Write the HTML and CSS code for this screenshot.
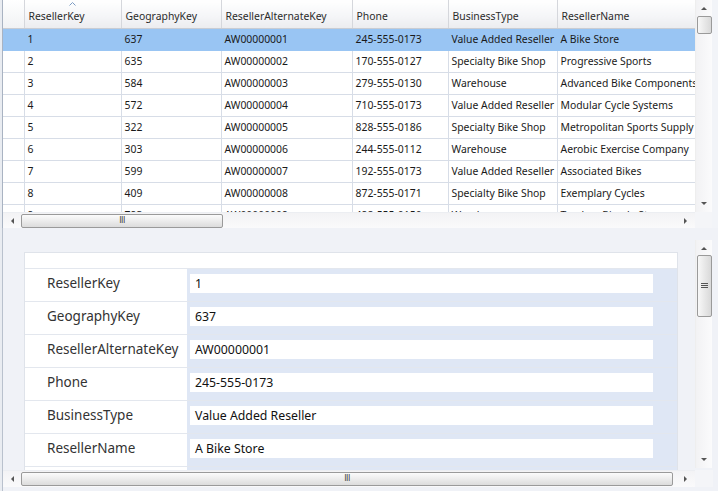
FILE: index.html
```html
<!DOCTYPE html>
<html>
<head>
<meta charset="utf-8">
<link rel="stylesheet" href="styles.css">
</head>
<body>
<div class="window">
  <div class="top">
    <div class="top-main">
      <div class="grid-wrap">
        <table class="grid">
          <colgroup>
            <col class="c0"><col class="c1"><col class="c2"><col class="c3"><col class="c4"><col class="c5"><col class="c6">
          </colgroup>
          <thead>
            <tr>
              <th class="rh"></th>
              <th class="sorted">ResellerKey<svg class="sort" width="7" height="4" viewBox="0 0 7 4"><path d="M0.5 3.5 L3.5 0.5 L6.5 3.5" fill="none" stroke="#7c9cc4" stroke-width="1"/></svg></th>
              <th>GeographyKey</th>
              <th>ResellerAlternateKey</th>
              <th>Phone</th>
              <th>BusinessType</th>
              <th>ResellerName</th>
            </tr>
          </thead>
          <tbody>
            <tr class="sel"><td class="rh"></td><td>1</td><td>637</td><td>AW00000001</td><td>245-555-0173</td><td>Value Added Reseller</td><td>A Bike Store</td></tr>
            <tr><td class="rh"></td><td>2</td><td>635</td><td>AW00000002</td><td>170-555-0127</td><td>Specialty Bike Shop</td><td>Progressive Sports</td></tr>
            <tr><td class="rh"></td><td>3</td><td>584</td><td>AW00000003</td><td>279-555-0130</td><td>Warehouse</td><td>Advanced Bike Components</td></tr>
            <tr><td class="rh"></td><td>4</td><td>572</td><td>AW00000004</td><td>710-555-0173</td><td>Value Added Reseller</td><td>Modular Cycle Systems</td></tr>
            <tr><td class="rh"></td><td>5</td><td>322</td><td>AW00000005</td><td>828-555-0186</td><td>Specialty Bike Shop</td><td>Metropolitan Sports Supply</td></tr>
            <tr><td class="rh"></td><td>6</td><td>303</td><td>AW00000006</td><td>244-555-0112</td><td>Warehouse</td><td>Aerobic Exercise Company</td></tr>
            <tr><td class="rh"></td><td>7</td><td>599</td><td>AW00000007</td><td>192-555-0173</td><td>Value Added Reseller</td><td>Associated Bikes</td></tr>
            <tr><td class="rh"></td><td>8</td><td>409</td><td>AW00000008</td><td>872-555-0171</td><td>Specialty Bike Shop</td><td>Exemplary Cycles</td></tr>
            <tr><td class="rh"></td><td>9</td><td>793</td><td>AW00000009</td><td>498-555-0150</td><td>Warehouse</td><td>Tandem Bicycle Store</td></tr>
          </tbody>
        </table>
      </div>
      <div class="vscroll top-v">
        <div class="arrow up"></div>
        <div class="vthumb small"></div>
        <div class="vtrack"></div>
        <div class="arrow down"></div>
      </div>
    </div>
    <div class="hrow">
      <div class="hscroll">
        <div class="arrow left"></div>
        <div class="hthumb short"><span class="grip">III</span></div>
        <div class="htrack"></div>
        <div class="arrow right"></div>
      </div>
      <div class="corner"></div>
    </div>
  </div>
  <div class="bottom">
    <div class="bottom-main">
      <div class="form-area">
        <div class="card">
          <div class="card-top"></div>
          <div class="frow"><div class="flabel">ResellerKey</div><div class="fval"><div class="input">1</div></div></div>
          <div class="frow"><div class="flabel">GeographyKey</div><div class="fval"><div class="input">637</div></div></div>
          <div class="frow"><div class="flabel">ResellerAlternateKey</div><div class="fval"><div class="input">AW00000001</div></div></div>
          <div class="frow"><div class="flabel">Phone</div><div class="fval"><div class="input">245-555-0173</div></div></div>
          <div class="frow"><div class="flabel">BusinessType</div><div class="fval"><div class="input">Value Added Reseller</div></div></div>
          <div class="frow"><div class="flabel">ResellerName</div><div class="fval"><div class="input">A Bike Store</div></div></div>
          <div class="frow"><div class="flabel"></div><div class="fval"></div></div>
        </div>
      </div>
      <div class="vscroll bot-v">
        <div class="arrow up"></div>
        <div class="vthumb big"><svg width="7" height="6" viewBox="0 0 7 6"><path d="M0 0.5H7M0 2.5H7M0 4.5H7" stroke="#555" stroke-width="1"/></svg></div>
        <div class="vtrack"></div>
        <div class="arrow down"></div>
      </div>
    </div>
    <div class="hrow bot-row">
      <div class="hscroll bot-h">
        <div class="arrow left"></div>
        <div class="hthumb long"><span class="grip">III</span></div>
        <div class="htrack"></div>
        <div class="arrow right"></div>
      </div>
      <div class="corner"></div>
    </div>
  </div>
</div>
</body>
</html>
```
FILE: styles.css
```css
* { box-sizing: border-box; }
html, body { margin: 0; padding: 0; }
body {
  width: 718px;
  height: 491px;
  overflow: hidden;
  background: #f2f4f8;
  font-family: "Noto Sans", "Open Sans", sans-serif;
  color: #1a1a1a;
}
.window {
  width: 718px;
  height: 491px;
  border-left: 2px solid #e9ecf1;
  display: flex;
  flex-direction: column;
}
.top {
  height: 228px;
  display: flex;
  flex-direction: column;
  width: 710px;
  border-left: 1px solid #a9b3c2;
  background: #fff;
}
.top-main {
  height: 212px;
  display: flex;
}
.grid-wrap {
  width: 692px;
  overflow: hidden;
  background: #fff;
}
.grid {
  border-collapse: collapse;
  table-layout: fixed;
  width: 733px;
  font-size: 10.4px;
}
.c0 { width: 21px; }
.c1 { width: 97px; }
.c2 { width: 100px; }
.c3 { width: 131px; }
.c4 { width: 96px; }
.c5 { width: 109px; }
.c6 { width: 179px; }
.grid th {
  height: 28px;
  text-align: left;
  font-weight: normal;
  color: #2b2b2b;
  padding: 4px 0 0 4px;
  background: linear-gradient(#ffffff, #f4f5f7 60%, #ececef);
  border-right: 1px solid #d5d7dc;
  border-bottom: 1px solid #c9ccd3;
  white-space: nowrap;
  position: relative;
}
.grid th.rh { background: linear-gradient(#ffffff, #f1f2f4); }
.sort {
  position: absolute;
  left: 44px;
  top: 2px;
}
.grid td {
  height: 22px;
  padding: 0 0 0 3px;
  border-right: 1px solid #d7dde7;
  border-bottom: 1px solid #d7dde7;
  white-space: nowrap;
  overflow: hidden;
}
.grid tr.sel td { background: #99c5f3; border-bottom-color: #99c5f3; border-right-color: #99c5f3; }
.grid td.rh { background: #fff; }
.grid tr.sel td.rh { background: #99c5f3; }

.vscroll {
  width: 17px;
  display: flex;
  flex-direction: column;
  align-items: center;
  background: linear-gradient(90deg, #f2f2f4, #fbfbfc);
  border-left: 1px solid #eeeeee;
}
.top-v { height: 212px; }
.vtrack { flex: 1; }
.arrow {
  width: 0; height: 0;
  border-style: solid;
  border-color: transparent;
}
.arrow.up { border-width: 0 3px 3px 3px; border-bottom-color: #555; margin: 7px 0 6px; }
.arrow.down { border-width: 3px 3px 0 3px; border-top-color: #555; margin: 6px 0 7px; }
.arrow.left { border-width: 3px 3px 3px 0; border-right-color: #555; margin: 0 7px 0 8px; }
.arrow.right { border-width: 3px 0 3px 3px; border-left-color: #555; margin: 0 8px 0 7px; }
.vthumb {
  width: 15px;
  border: 1px solid #9a9a9a;
  border-radius: 2px;
  background: linear-gradient(90deg, #f8f8f8, #e8e8e8 50%, #d9d9d9);
  display: flex;
  align-items: center;
  justify-content: center;
}
.vthumb.small { height: 18px; }
.vthumb.big { height: 62px; }

.hrow {
  height: 16px;
  display: flex;
}
.hscroll {
  width: 692px;
  height: 16px;
  display: flex;
  align-items: center;
  background: linear-gradient(#f3f3f5, #fafafb);
  border-top: 1px solid #eceef2;
}
.corner { flex: 1; background: #f4f5f8; }
.htrack { flex: 1; }
.hthumb {
  height: 14px;
  border: 1px solid #9a9a9a;
  border-radius: 2px;
  background: linear-gradient(#fbfbfb, #ececec 50%, #dcdcdc);
  display: flex;
  align-items: center;
  justify-content: center;
}
.hthumb.short { width: 202px; }
.hthumb.long { width: 652px; }
.grip { font-size: 8px; color: #444; letter-spacing: -0.5px; font-family: "DejaVu Sans", sans-serif; line-height: 1; }

.bottom {
  flex: 1;
  display: flex;
  flex-direction: column;
  background: #f0f2f7;
  padding-top: 12px;
  border-left: 1px solid #b9c1cd;
}
.bottom-main {
  height: 230px;
  display: flex;
}
.form-area {
  width: 692px;
  padding: 12px 0 0 21px;
  overflow: hidden;
}
.card {
  width: 654px;
  background: #fff;
  border: 1px solid #dfe3ea;
  border-bottom: none;
}
.card-top { height: 15px; }
.frow {
  height: 33px;
  display: flex;
  border-top: 1px solid #e3e7ee;
}
.flabel {
  width: 162px;
  padding: 5px 0 0 22px;
  font-size: 13.5px;
  color: #333;
  background: #fff;
}
.fval {
  flex: 1;
  background: #dfe7f5;
  padding: 5px 24px 0 3px;
}
.input {
  height: 19px;
  background: #fff;
  font-size: 12.3px;
  padding: 1px 0 0 5px;
  color: #111;
}
.bot-v { height: 228px; }
.bot-v .arrow.up { margin: 7px 0 5px; }
.bot-row { height: 17px; width: 710px; }
.bot-h { height: 17px; }
```
